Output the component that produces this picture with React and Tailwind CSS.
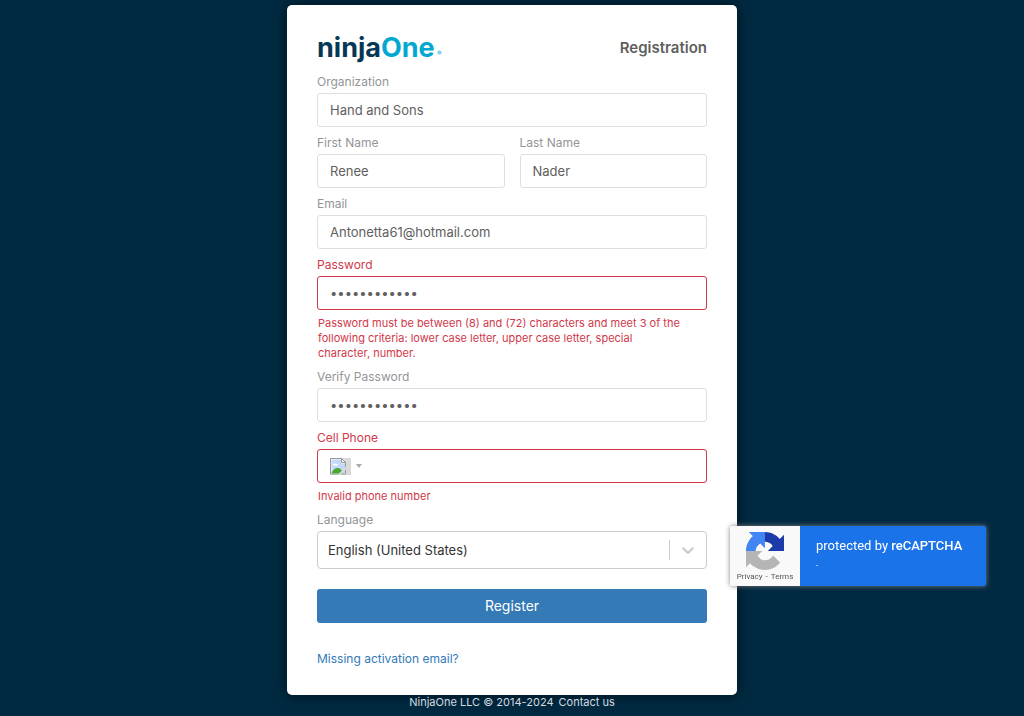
import React from "react";

const FIELD =
  "block w-full h-[34px] rounded-[3px] border bg-white px-3 text-[13px] text-[#606060] outline-none";
const LABEL = "mb-1 block text-xs leading-[14px]";

function Field({ id, label, type = "text", value, error }) {
  return (
    <div className="min-w-0 flex-1">
      <label htmlFor={id} className={`${LABEL} ${error ? "text-[#d1384a]" : "text-[#949597]"}`}>
        {label}
      </label>
      <input
        id={id}
        type={type}
        defaultValue={value}
        autoComplete="off"
        className={`${FIELD} ${error ? "border-[#d1384a]" : "border-[#dedfe0]"}`}
      />
      {error && <ErrorText>{error}</ErrorText>}
    </div>
  );
}

function ErrorText({ children }) {
  return <p className="mt-1.5 pr-6 pl-px text-[11px] leading-[15px] text-[#d1384a]">{children}</p>;
}

function Logo() {
  return (
    <div className="flex items-end text-[27px] leading-[26px]">
      <span className="font-bold text-[#053856]">ninja</span>
      <span className="font-bold text-[#03a8d1]">One</span>
      <svg width="5" height="5" viewBox="0 0 5 5" className="mb-1.5 ml-0.5" aria-hidden="true">
        <circle cx="2.5" cy="2.5" r="1.7" fill="#8bd8ea" stroke="#55c5df" strokeWidth="0.6" />
      </svg>
    </div>
  );
}

function MissingFlag() {
  return (
    <svg width="21" height="17" viewBox="0 0 21 17" aria-hidden="true">
      <path d="M0 0h21v17H0z" fill="#dadada" />
      <path d="M.5.5h11l4 4v11.500H.5z" fill="#fff" stroke="#969696" />
      <path d="M1.500 1.500h10v4h3.500v10H1.500z" fill="#c3d8fb" />
      <path d="M3 7c0-1.800 2-2.300 2.500-1 1.300-.7 2.700.2 2.500 1.500H3z" fill="#fff" />
      <path d="M1.500 15.500c1-3.500 3.500-5.500 6-5.500s4.500 2 6 5.500z" fill="#4ca72e" />
      <path d="M7.500 17l8.500-8.500V11.500L10.500 17z" fill="#dadada" />
      <path d="M11.500.5v4h4z" fill="#fff" stroke="#969696" />
    </svg>
  );
}

function RecaptchaMark() {
  return (
    <svg width="38" height="38" viewBox="0 0 64 64" aria-hidden="true">
      <path
        d="M64 31.955l-.033-1.370V4.687l-7.160 7.160C50.948 4.674 42.033.093 32.050.093c-10.400 0-19.622 4.960-25.458 12.640l11.736 11.860a15.550 15.550 0 0 1 4.754-5.334c2.050-1.600 4.952-2.906 8.968-2.906.485 0 .860.057 1.135.163 4.976.393 9.288 3.140 11.828 7.124l-8.307 8.307L64 31.953"
        fill="#1c3aa9"
      />
      <path
        d="M31.862.094l-1.370.033H4.594l7.160 7.160C4.580 13.147 0 22.060 0 32.046c0 10.400 4.960 19.622 12.640 25.458L24.500 45.768a15.550 15.550 0 0 1-5.334-4.754c-1.600-2.050-2.906-4.952-2.906-8.968 0-.485.057-.860.163-1.135.393-4.976 3.140-9.288 7.124-11.828l8.307 8.307L31.860.095"
        fill="#4285f4"
      />
      <path
        d="M.001 32.045l.033 1.370v25.898l7.160-7.160c5.860 7.173 14.774 11.754 24.760 11.754 10.400 0 19.622-4.960 25.458-12.640l-11.736-11.860a15.550 15.550 0 0 1-4.754 5.334c-2.050 1.600-4.952 2.906-8.968 2.906-.485 0-.860-.057-1.135-.163-4.976-.393-9.288-3.140-11.828-7.124l8.307-8.307L.003 32.045"
        fill="#b5b5b5"
      />
    </svg>
  );
}

function RecaptchaBadge() {
  return (
    <aside className="fixed right-[38px] bottom-[130px] flex h-[60px] w-64 overflow-hidden rounded-[2px] font-[Roboto,sans-serif] shadow-[0_0_5px_gray]">
      <div className="flex w-[70px] flex-col items-center bg-[#f9f9f9] pt-1.5">
        <RecaptchaMark />
        <div className="mt-0.5 flex gap-[3px] text-[8px] leading-[10px] text-[#555]">
          <a href="#privacy">Privacy</a>
          <span>-</span>
          <a href="#terms">Terms</a>
        </div>
      </div>
      <div className="flex-1 bg-[#1a73e8] px-4 pt-3 text-white">
        <p className="text-[13px] leading-4">
          protected by <strong className="font-medium">reCAPTCHA</strong>
        </p>
        <p className="mt-1 text-[8px] leading-4">-</p>
      </div>
    </aside>
  );
}

export default function App() {
  return (
    <div className="flex min-h-screen flex-col items-center bg-[#002a42] px-4 pt-[5px] font-[Inter,sans-serif]">
      <main className="w-full max-w-[450px] rounded-[5px] bg-white px-[30px] pt-[30px] pb-7 shadow-[0_0_15px_rgba(0,0,0,0.6)]">
        <header className="mb-3.5 flex items-center justify-between">
          <Logo />
          <h1 className="text-[15px] leading-[26px] font-semibold text-[#606060]">Registration</h1>
        </header>

        <form className="flex flex-col" onSubmit={(e) => e.preventDefault()}>
          <div className="flex flex-col gap-[9px]">
            <Field id="organization" label="Organization" value="Hand and Sons" />
            <div className="flex gap-[15px]">
              <Field id="first-name" label="First Name" value="Renee" />
              <Field id="last-name" label="Last Name" value="Nader" />
            </div>
            <Field id="email" label="Email" type="email" value="Antonetta61@hotmail.com" />
            <Field
              id="password"
              label="Password"
              type="password"
              value="abcdefghijkl"
              error="Password must be between (8) and (72) characters and meet 3 of the following criteria: lower case letter, upper case letter, special character, number."
            />
            <Field id="verify" label="Verify Password" type="password" value="abcdefghijkl" />

            <div>
              <label htmlFor="phone" className={`${LABEL} text-[#d1384a]`}>
                Cell Phone
              </label>
              <div className="flex h-[34px] items-center rounded-[3px] border border-[#d1384a] pl-3">
                <button type="button" aria-label="Country" className="flex items-center gap-[5px]">
                  <MissingFlag />
                  <svg width="6" height="4" viewBox="0 0 6 4" aria-hidden="true">
                    <path d="M0 0h6L3 4z" fill="#aaa" />
                  </svg>
                </button>
                <input
                  id="phone"
                  type="tel"
                  className="h-full min-w-0 flex-1 bg-transparent px-2 text-[13px] text-[#606060] outline-none"
                />
              </div>
              <ErrorText>Invalid phone number</ErrorText>
            </div>

            <div>
              <label htmlFor="language" className={`${LABEL} text-[#949597]`}>
                Language
              </label>
              <div className="grid">
                <select
                  id="language"
                  className="col-start-1 row-start-1 h-[38px] w-full appearance-none rounded-[4px] border border-[#ccc] bg-white px-2.5 pt-0.5 text-[13px] text-[#333] outline-none"
                >
                  <option>English (United States)</option>
                </select>
                <div className="pointer-events-none col-start-1 row-start-1 flex items-center self-center justify-self-end pr-[9px]">
                  <span className="mr-2 h-5 w-px bg-[#ccc]" />
                  <svg width="20" height="20" viewBox="0 0 20 20" fill="#ccc" aria-hidden="true">
                    <path d="M4.516 7.548c.436-.446 1.043-.481 1.576 0L10 11.295l3.908-3.747c.533-.481 1.141-.446 1.574 0 .436.445.408 1.197 0 1.615-.406.418-4.695 4.502-4.695 4.502a1.095 1.095 0 0 1-1.576 0S4.924 9.581 4.516 9.163s-.436-1.170 0-1.615z" />
                  </svg>
                </div>
              </div>
            </div>
          </div>

          <button
            type="submit"
            className="mt-5 h-[34px] rounded-[3px] bg-[#337ab7] text-sm text-white"
          >
            Register
          </button>
        </form>

        <a href="#activation" className="mt-7 block text-xs leading-4 text-[#337ab7]">
          Missing activation email?
        </a>
      </main>

      <footer className="flex gap-[5px] text-[11px] leading-[15px] text-[#d5dbe0]">
        <span>NinjaOne LLC © 2014-2024</span>
        <a href="#contact">Contact us</a>
      </footer>

      <RecaptchaBadge />
    </div>
  );
}
